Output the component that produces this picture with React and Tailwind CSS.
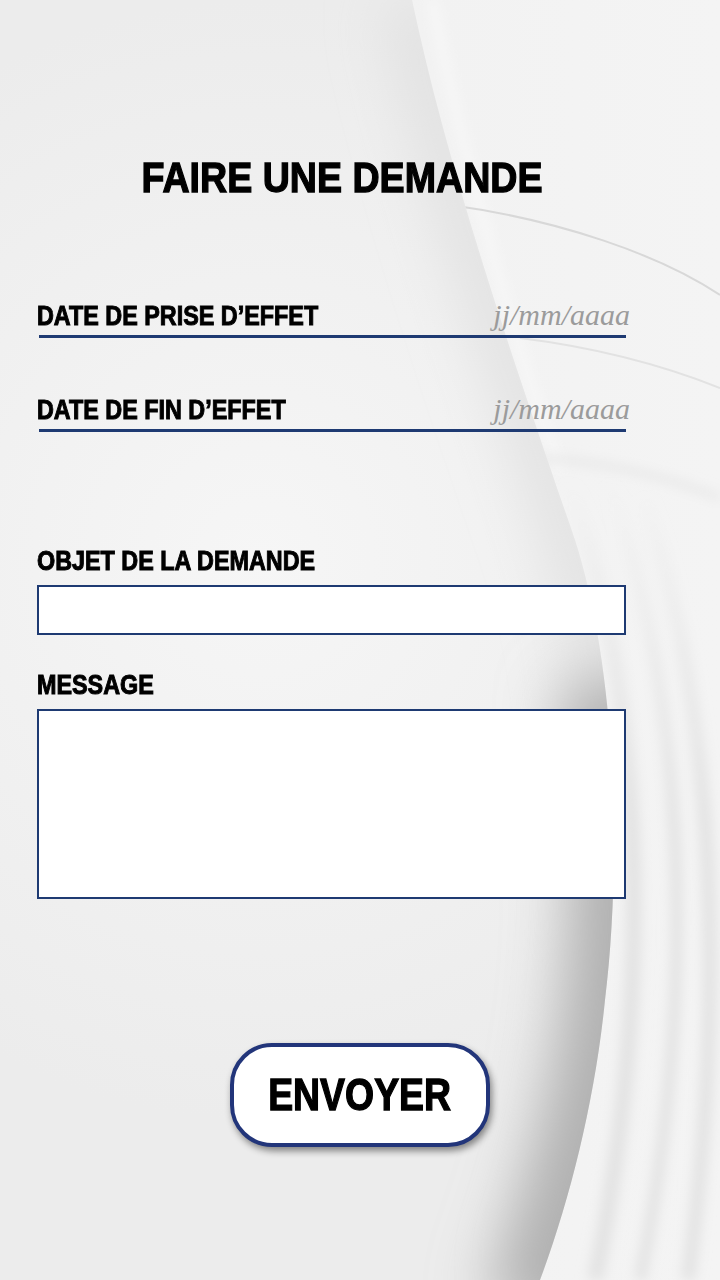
import React from 'react';

const HEAVY = { fontFamily: '"Liberation Sans", Arial, sans-serif' };
const SERIF = { fontFamily: '"Liberation Serif", "Times New Roman", serif' };

const BORD = 'M412 0 C 450 180 520 380 575 540 C 620 680 620 880 605 1000 C 595 1100 570 1200 540 1280';

function Fond() {
  return (
    <svg className="absolute inset-0 w-full h-full" viewBox="0 0 720 1280" preserveAspectRatio="none" aria-hidden="true">
      <defs>
        <radialGradient id="clair" cx="260" cy="560" r="560" gradientUnits="userSpaceOnUse">
          <stop offset="0" stopColor="#f6f6f6" />
          <stop offset="1" stopColor="#ececec" />
        </radialGradient>
        <linearGradient id="droite" x1="0" y1="0" x2="1" y2="0">
          <stop offset="0" stopColor="#efefef" />
          <stop offset="1" stopColor="#f4f4f4" />
        </linearGradient>
        <linearGradient id="bande" x1="0" y1="480" x2="0" y2="820" gradientUnits="userSpaceOnUse">
          <stop offset="0" stopColor="#e3e3e3" stopOpacity="0" />
          <stop offset="1" stopColor="#e3e3e3" stopOpacity="1" />
        </linearGradient>
        <clipPath id="forme">
          <path d={`M0 0 L 412 0 ${BORD.slice(7)} L 0 1280 Z`} />
        </clipPath>
        <filter id="flou" filterUnits="userSpaceOnUse" x="-100" y="-100" width="920" height="1480">
          <feGaussianBlur stdDeviation="30" />
        </filter>
        <filter id="flou2" filterUnits="userSpaceOnUse" x="-100" y="-100" width="920" height="1480">
          <feGaussianBlur stdDeviation="6" />
        </filter>
      </defs>
      <rect width="720" height="1280" fill="url(#droite)" />
      {/* bandes a droite */}
      <g filter="url(#flou2)" fill="none" stroke="url(#bande)">
        <path d="M560 460 C 640 660 660 960 595 1280" strokeWidth="16" />
        <path d="M605 470 C 685 690 700 980 640 1280" strokeWidth="12" />
        <path d="M645 500 C 718 720 725 1000 688 1280" strokeWidth="14" />
      </g>
      <path d="M432 0 C 470 190 520 360 560 470" stroke="#f8f8f8" strokeWidth="8" fill="none" filter="url(#flou2)" />
      <path d="M450 205 C 560 220 660 255 720 295" stroke="#d8d8d8" strokeWidth="2" fill="none" />
      <path d="M520 338 C 600 348 670 368 720 388" stroke="#e2e2e2" strokeWidth="2" fill="none" />
      <path d="M540 458 C 610 462 670 478 720 498" stroke="#e3e3e3" strokeWidth="5" fill="none" filter="url(#flou2)" />
      {/* grande forme */}
      <g clipPath="url(#forme)">
        <rect width="720" height="1280" fill="url(#clair)" />
        <path d={BORD} stroke="#dfdfdf" strokeWidth="50" fill="none" filter="url(#flou)" />
        <path d="M618 680 C 642 850 632 1020 602 1130 C 587 1190 567 1250 542 1320" stroke="#b0b0b0" strokeWidth="120" fill="none" filter="url(#flou)" />
      </g>
    </svg>
  );
}

function ChampDate({ label, className }) {
  return (
    <div className={className}>
      <div className="flex items-baseline justify-between w-[593px]">
        <span className="inline-block origin-left scale-x-[0.865] text-[27px] leading-none font-bold text-black [-webkit-text-stroke:1px_#000] whitespace-nowrap" style={HEAVY}>
          {label}
        </span>
        <span className="text-[30px] leading-none italic text-[#9b9b9b]" style={SERIF}>jj/mm/aaaa</span>
      </div>
      <div className="mt-[5px] ml-[2px] w-[587px] h-[3px] bg-[#1e3a72]" />
    </div>
  );
}

function Label({ children, className }) {
  return (
    <div className={className}>
      <span className="inline-block origin-left scale-x-[0.865] text-[27px] leading-none font-bold text-black [-webkit-text-stroke:1px_#000] whitespace-nowrap" style={HEAVY}>
        {children}
      </span>
    </div>
  );
}

export default function App() {
  return (
    <div className="relative w-[720px] h-[1280px] overflow-hidden bg-[#efefef]">
      <Fond />
      <div className="relative flex flex-col px-[37px]">
        <div className="mt-[157px] flex justify-center pr-[36px]">
          <h1 className="inline-block scale-x-[0.895] text-[42px] leading-none font-bold text-black whitespace-nowrap [-webkit-text-stroke:1.3px_#000]" style={HEAVY}>
            FAIRE UNE DEMANDE
          </h1>
        </div>

        <ChampDate className="mt-[101px]" label="DATE DE PRISE D’EFFET" />
        <ChampDate className="mt-[56px]" label="DATE DE FIN D’EFFET" />

        <Label className="mt-[116px] h-[27px]">OBJET DE LA DEMANDE</Label>
        <div className="mt-[10px] w-[589px] h-[50px] bg-white border-2 border-[#1e3a72]" />

        <Label className="mt-[37px] h-[27px]">MESSAGE</Label>
        <div className="mt-[10px] w-[589px] h-[190px] bg-white border-2 border-[#1e3a72]" />
      </div>

      <div className="relative mt-[144px] flex justify-center">
        <button className="w-[260px] h-[104px] rounded-[42px] bg-white border-4 border-[#22357a] shadow-[2px_4px_7px_rgba(0,0,0,0.45)] flex items-center justify-center">
          <span className="inline-block scale-x-[0.85] text-[44px] leading-none font-bold text-black [-webkit-text-stroke:1.3px_#000]" style={HEAVY}>
            ENVOYER
          </span>
        </button>
      </div>
    </div>
  );
}
